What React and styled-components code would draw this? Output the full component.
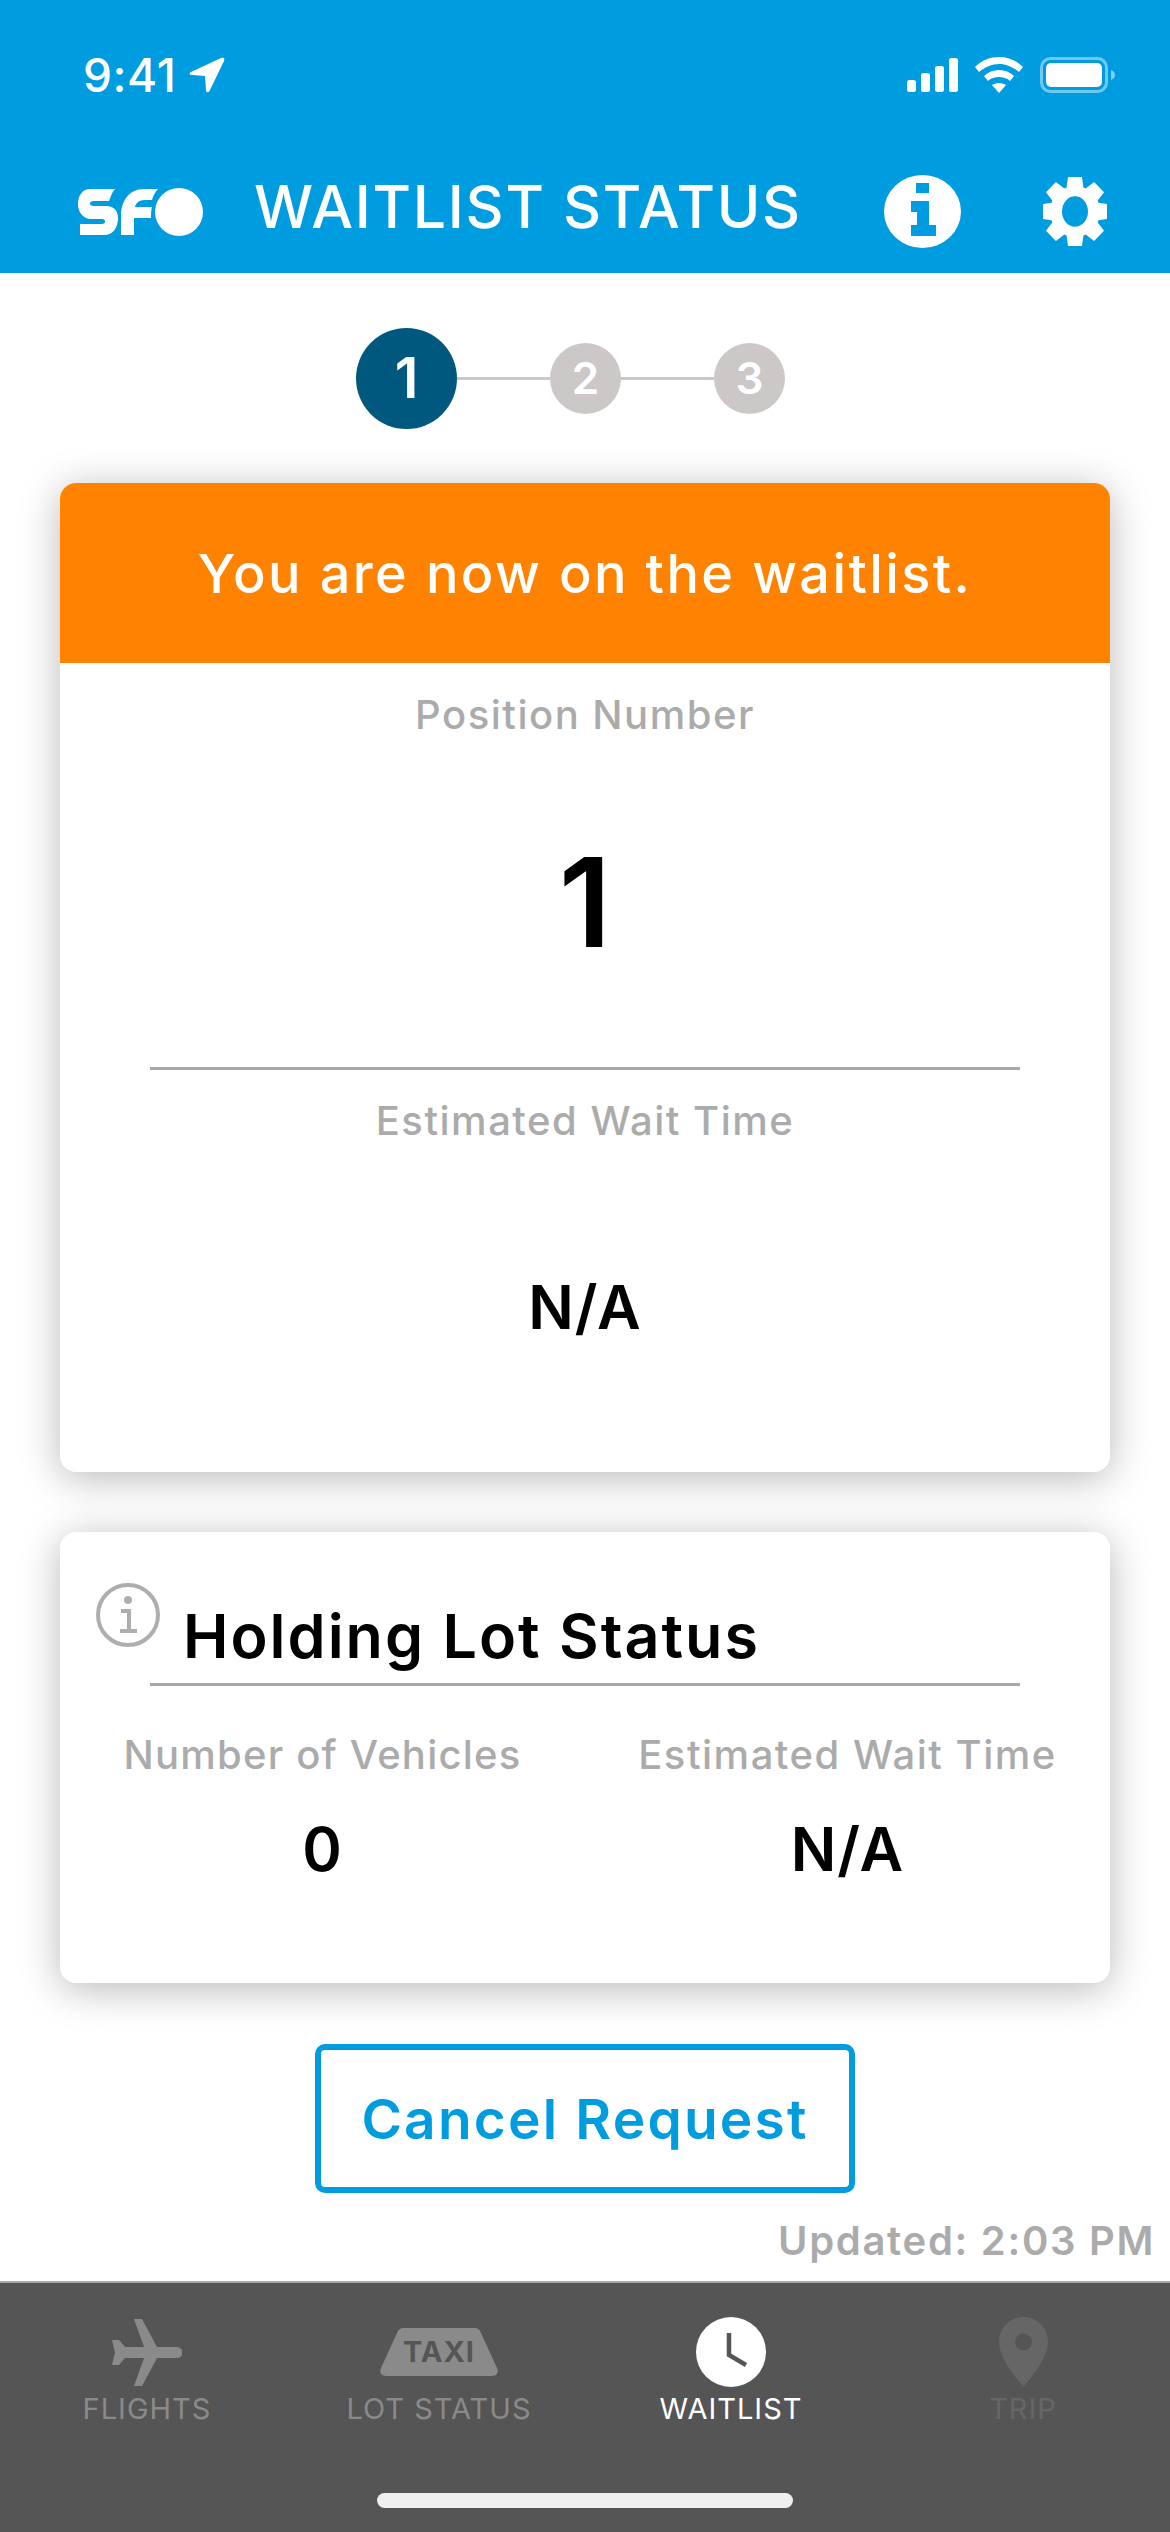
import React from 'react'
import styled, { createGlobalStyle } from 'styled-components'

const GlobalStyle = createGlobalStyle`
  html, body { margin: 0; padding: 0; background: #fff; }
  body { font-family: 'Inter', 'Liberation Sans', sans-serif; }
`

const Screen = styled.div`
  width: 1170px;
  height: 2532px;
  display: flex;
  flex-direction: column;
  overflow: hidden;
  background: #fff;
`

const Header = styled.header`
  height: 273px;
  flex: none;
  background: #009ce0;
  color: #fff;
  box-sizing: border-box;
`

const StatusBar = styled.div`
  height: 150px;
  padding: 0 55px 0 83px;
  display: flex;
  align-items: center;
  justify-content: space-between;
  box-sizing: border-box;
`

const Clock = styled.div`
  display: flex;
  align-items: center;
  gap: 13px;
  font-size: 46px;
  font-weight: 500;
  letter-spacing: 0.6px;
`

const StatusIcons = styled.div`
  display: flex;
  align-items: center;
  gap: 17px;
`

const NavRow = styled.div`
  height: 123px;
  padding: 0 63px 0 78px;
  display: flex;
  align-items: center;
`

const Title = styled.h1`
  margin: 0 0 11px 50px;
  flex: 1;
  font-size: 59px;
  font-weight: 500;
  letter-spacing: 1.7px;
  white-space: nowrap;
`

const NavIcons = styled.div`
  display: flex;
  align-items: center;
  gap: 82px;
`

const Content = styled.main`
  flex: 1;
  padding: 0 60px;
  display: flex;
  flex-direction: column;
  align-items: center;
  box-sizing: border-box;
`

const Stepper = styled.div`
  height: 210px;
  flex: none;
  padding-right: 29px;
  display: flex;
  align-items: center;
  justify-content: center;
`

const StepDot = styled.div`
  width: ${p => (p.$active ? 101 : 71)}px;
  height: ${p => (p.$active ? 101 : 71)}px;
  border-radius: 50%;
  background: ${p => (p.$active ? '#00587e' : '#cbc8c7')};
  color: #fff;
  display: flex;
  align-items: center;
  justify-content: center;
  font-size: ${p => (p.$active ? 56 : 44)}px;
  font-weight: 600;
`

const StepLine = styled.div`
  width: 93px;
  height: 3px;
  background: #cbc8c7;
`

const Card = styled.section`
  width: 100%;
  background: #fff;
  border-radius: 16px;
  box-shadow: 0 6px 40px rgba(0, 0, 0, 0.28);
  overflow: hidden;
  box-sizing: border-box;
`

const WaitCard = styled(Card)`
  height: 989px;
`

const Banner = styled.div`
  height: 180px;
  background: #ff8300;
  color: #fff;
  display: flex;
  align-items: center;
  justify-content: center;
  font-size: 54px;
  font-weight: 500;
  letter-spacing: 2.4px;
`

const WaitBody = styled.div`
  padding: 0 90px;
  display: flex;
  flex-direction: column;
  align-items: center;
`

const Label = styled.div`
  font-size: 40px;
  font-weight: 500;
  color: #ababab;
  letter-spacing: ${p => p.$spacing || 1.5}px;
  text-align: center;
  white-space: nowrap;
`

const PositionLabel = styled(Label)`
  margin-top: 27px;
`

const BigNumber = styled.div`
  height: 328px;
  padding-bottom: 2px;
  box-sizing: border-box;
  display: flex;
  align-items: center;
  justify-content: center;
  font-size: 124px;
  font-weight: 600;
  color: #000;
`

const Divider = styled.div`
  width: 100%;
  height: 3px;
  background: #a8a8a8;
`

const WaitLabel = styled(Label)`
  margin-top: 26px;
`

const WaitValue = styled.div`
  margin-top: 126px;
  font-size: 60px;
  font-weight: 600;
  color: #000;
  letter-spacing: 1px;
`

const LotCard = styled(Card)`
  height: 451px;
  margin-top: 60px;
  flex: none;
  position: relative;
`

const LotInfo = styled.svg`
  position: absolute;
  left: 35px;
  top: 50px;
`

const LotHead = styled.div`
  margin: 0 90px;
  padding: 69px 0 0 33px;
  height: 154px;
  box-sizing: border-box;
  border-bottom: 3px solid #a8a8a8;
`

const LotTitle = styled.h2`
  margin: 0;
  font-size: 61px;
  line-height: 70px;
  font-weight: 600;
  color: #000;
  letter-spacing: 2px;
  white-space: nowrap;
`

const LotGrid = styled.div`
  display: grid;
  grid-template-columns: 525px 525px;
  margin-top: 44px;
`

const LotColumn = styled.div`
  display: flex;
  flex-direction: column;
  align-items: center;
`

const LotValue = styled.div`
  margin-top: 34px;
  font-size: 60px;
  font-weight: 600;
  color: #000;
  letter-spacing: 1px;
`

const CancelButton = styled.button`
  flex: none;
  width: 540px;
  height: 149px;
  margin-top: 61px;
  border: 6px solid #009ce0;
  border-radius: 10px;
  background: #fff;
  color: #009ce0;
  font-family: inherit;
  font-size: 55px;
  font-weight: 600;
  letter-spacing: 2.2px;
`

const Updated = styled.div`
  align-self: flex-end;
  margin: 24px -45px 0 0;
  font-size: 40px;
  line-height: 48px;
  font-weight: 600;
  color: #ababab;
  letter-spacing: 1.7px;
`

const TabBar = styled.nav`
  height: 251px;
  flex: none;
  box-sizing: border-box;
  border-top: 2px solid #a8a8a8;
  background: #555;
  position: relative;
`

const Tabs = styled.div`
  display: grid;
  grid-template-columns: 292px 292px 292px 292px;
  padding: 34px 0 0 1px;
`

const Tab = styled.div`
  display: flex;
  flex-direction: column;
  align-items: center;
  color: ${p => p.$color};
`

const TabIcon = styled.div`
  height: 70px;
  display: flex;
  align-items: center;
  justify-content: center;
`

const TabLabel = styled.div`
  margin-top: 5px;
  font-size: 29px;
  line-height: 34px;
  letter-spacing: 1px;
  white-space: nowrap;
`

const HomeIndicator = styled.div`
  position: absolute;
  left: 377px;
  bottom: 24px;
  width: 416px;
  height: 15px;
  border-radius: 8px;
  background: #efefef;
`

const Gear = () => {
  const teeth = [0, 45, 90, 135, 180, 225, 270, 315]
  return (
    <svg width="64" height="69" viewBox="0 0 64 68" preserveAspectRatio="none" fill="#fff">
      {teeth.map(a => (
        <path key={a} d="M25 0h14l2 14H23z" transform={`rotate(${a} 32 34)`} />
      ))}
      <path fillRule="evenodd" d="M32 9a25 25 0 1 0 0 50 25 25 0 0 0 0-50zm0 10a13 15 0 1 1 0 30 13 15 0 0 1 0-30z" />
    </svg>
  )
}

const App = () => (
  <Screen>
    <GlobalStyle />
    <Header>
      <StatusBar>
        <Clock>
          9:41
          <svg width="36" height="36" viewBox="0 0 36 36" fill="#fff">
            <path d="M2 15 32 1c3-1 4 0 3 3L21 33c-1 3-4 3-4 0l-1-14-13-1c-3 0-3-2-1-3z" />
          </svg>
        </Clock>
        <StatusIcons>
          <svg width="51" height="34" viewBox="0 0 51 34" fill="#fff">
            <rect x="0" y="22" width="9" height="12" rx="2.5" />
            <rect x="14" y="15" width="9" height="19" rx="2.5" />
            <rect x="28" y="8" width="9" height="26" rx="2.5" />
            <rect x="42" y="0" width="9" height="34" rx="2.5" />
          </svg>
          <svg width="48" height="36" viewBox="0 0 48 36" fill="#fff">
            <path d="M24 0c9 0 17 3 24 10l-4 5C38 10 31 7 24 7S10 10 4 15L0 10C7 3 15 0 24 0z" />
            <path d="M24 13c6 0 11 2 15 6l-4 5c-3-3-7-4-11-4s-8 1-11 4l-4-5c4-4 9-6 15-6z" />
            <path d="M24 26c3 0 5 1 7 2l-7 8-7-8c2-1 4-2 7-2z" />
          </svg>
          <svg width="75" height="36" viewBox="0 0 75 36">
            <rect x="1.5" y="1.5" width="65" height="33" rx="9" fill="none" stroke="#fff" strokeOpacity="0.45" strokeWidth="3" />
            <rect x="6" y="6" width="56" height="24" rx="5" fill="#fff" />
            <path d="M71 13c3 1 4 3 4 5s-1 4-4 5z" fill="#fff" fillOpacity="0.5" />
          </svg>
        </StatusIcons>
      </StatusBar>
      <NavRow>
        <svg width="126" height="48" viewBox="0 0 126 48" fill="#fff">
          <path d="M12 1H37C34 4 33 8 31 13H16C13 13 12 14 12 15.500C12 17 13 18 16 18H28C37 18 40 24 40 30C40 40 35 47 26 47H2V36H24C26 36 27 35 27 33.500C27 32 26 31 24 31H13C5 31 0 24 0 16C0 7 5 1 12 1Z" />
          <path d="M43 47V28C43 12 52 1 66 1H80C77 4 75 8 74 12H67C61 12 58 15 57 19H74C73 22 73 26 73 30H56V47Z" />
          <circle cx="101" cy="24" r="24" />
        </svg>
        <Title>WAITLIST STATUS</Title>
        <NavIcons>
          <svg width="77" height="73" viewBox="0 0 77 73">
            <path fill="#fff" fillRule="evenodd" d="M38.5 0a38.5 36.5 0 1 1 0 73 38.5 36.5 0 0 1 0-73zM32 8v10h13V8H32zm-5 18v11h6v13h-6v11h25V50h-7V26H27z" />
          </svg>
          <Gear />
        </NavIcons>
      </NavRow>
    </Header>

    <Content>
      <Stepper>
        <StepDot $active>1</StepDot>
        <StepLine />
        <StepDot>2</StepDot>
        <StepLine />
        <StepDot>3</StepDot>
      </Stepper>

      <WaitCard>
        <Banner>You are now on the waitlist.</Banner>
        <WaitBody>
          <PositionLabel>Position Number</PositionLabel>
          <BigNumber>1</BigNumber>
          <Divider />
          <WaitLabel>Estimated Wait Time</WaitLabel>
          <WaitValue>N/A</WaitValue>
        </WaitBody>
      </WaitCard>

      <LotCard>
        <LotInfo width="66" height="66" viewBox="0 0 66 66" fill="none">
          <circle cx="33" cy="33" r="30" stroke="#aeaeae" strokeWidth="4" />
          <circle cx="33" cy="18" r="4" fill="#aeaeae" />
          <path d="M26 29h8v20M25 49h17" stroke="#aeaeae" strokeWidth="4" />
        </LotInfo>
        <LotHead>
          <LotTitle>Holding Lot Status</LotTitle>
        </LotHead>
        <LotGrid>
          <LotColumn>
            <Label $spacing={1.2}>Number of Vehicles</Label>
            <LotValue>0</LotValue>
          </LotColumn>
          <LotColumn>
            <Label>Estimated Wait Time</Label>
            <LotValue>N/A</LotValue>
          </LotColumn>
        </LotGrid>
      </LotCard>

      <CancelButton>Cancel Request</CancelButton>
      <Updated>Updated: 2:03 PM</Updated>
    </Content>

    <TabBar>
      <Tabs>
        <Tab $color="#8a8a8a">
          <TabIcon>
            <svg width="70" height="67" viewBox="0 0 70 67" fill="#8a8a8a">
              <path d="M22 0h8l15 28h20a5.5 5.5 0 0 1 0 11H45L30 67h-8l10-28H13l-6 7H0l3-12.5L0 21h7l6 7h19L22 0z" />
            </svg>
          </TabIcon>
          <TabLabel>FLIGHTS</TabLabel>
        </Tab>
        <Tab $color="#8a8a8a">
          <TabIcon>
            <svg width="118" height="48" viewBox="0 0 118 48">
              <path d="M24 0h70c4 0 6 2 7 5l16 35c2 4 0 8-5 8H6c-5 0-7-4-5-8L17 5c1-3 3-5 7-5z" fill="#8a8a8a" />
              <text x="59" y="34" textAnchor="middle" fontFamily="Inter, sans-serif" fontSize="29" fontWeight="700" letterSpacing="1" fill="#555">TAXI</text>
            </svg>
          </TabIcon>
          <TabLabel>LOT STATUS</TabLabel>
        </Tab>
        <Tab $color="#fff">
          <TabIcon>
            <svg width="70" height="70" viewBox="0 0 70 70">
              <circle cx="35" cy="35" r="35" fill="#fff" />
              <path d="M33 16v22l17 10" fill="none" stroke="#555" strokeWidth="4.5" />
            </svg>
          </TabIcon>
          <TabLabel>WAITLIST</TabLabel>
        </Tab>
        <Tab $color="#666">
          <TabIcon>
            <svg width="49" height="70" viewBox="0 0 49 70">
              <path fill="#666" fillRule="evenodd" d="M24.5 0C38 0 49 11 49 25c0 15-14 32-24.5 45C14 57 0 40 0 25 0 11 11 0 24.5 0zm0 16.500a8.500 8.500 0 1 0 0 17 8.500 8.500 0 0 0 0-17z" />
            </svg>
          </TabIcon>
          <TabLabel>TRIP</TabLabel>
        </Tab>
      </Tabs>
      <HomeIndicator />
    </TabBar>
  </Screen>
)

export default App
